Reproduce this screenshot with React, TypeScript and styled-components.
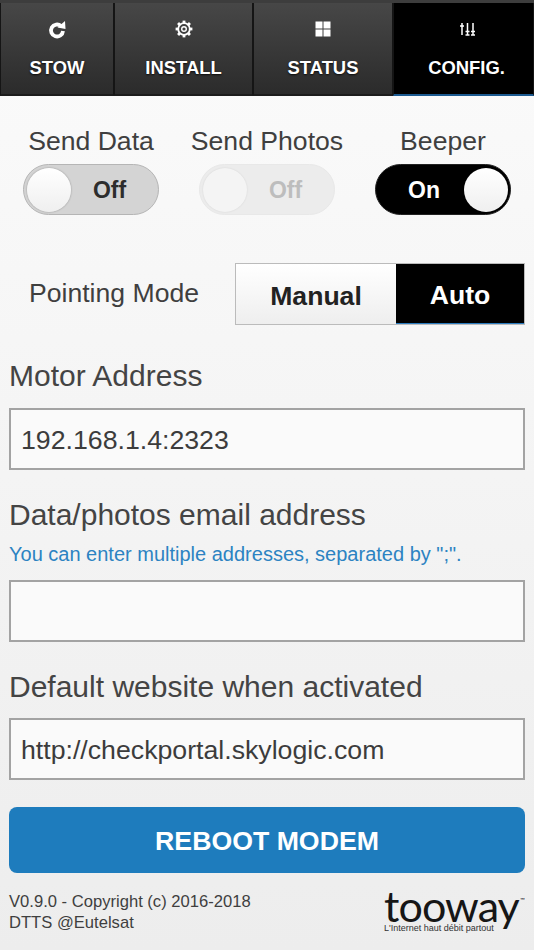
import React from 'react'
import styled, { createGlobalStyle } from 'styled-components'

const Global = createGlobalStyle`
  html, body { margin: 0; padding: 0; }
  body { font-family: "Liberation Sans", Arial, sans-serif; }
  * { box-sizing: border-box; }
`

const Page = styled.div`
  width: 534px;
  height: 950px;
  overflow: hidden;
  display: flex;
  flex-direction: column;
  background: linear-gradient(#fbfbfb, #ededed);
  color: #3f3f3f;
`

const TabBar = styled.div`
  height: 96px;
  flex: none;
  display: grid;
  grid-template-columns: 114px 139px 140px 141px;
  padding-top: 3px;
  background: #3d3d3d;
`

const Tab = styled.div<{ $active?: boolean }>`
  display: flex;
  flex-direction: column;
  align-items: center;
  height: 93px;
  padding-top: 14px;
  padding-left: ${p => (p.$active ? 6 : 0)}px;
  color: #fff;
  font-size: 18.4px;
  font-weight: bold;
  text-shadow: 0 1px 2px rgba(0, 0, 0, 0.8);
  border-left: 1px solid #151515;
  border-right: 1px solid #151515;
  background: ${p => (p.$active ? '#000' : 'linear-gradient(#474747, #2b2b2b)')};
  border-bottom: 2px solid ${p => (p.$active ? '#1c5a90' : '#1c1c1c')};
`

const TabIcon = styled.svg`
  width: 24px;
  height: 24px;
  flex: none;
`

const TabLabel = styled.span`
  margin-top: 16px;
  line-height: 22px;
`

const Content = styled.div`
  flex: 1;
  display: flex;
  flex-direction: column;
  padding: 0 9px;
`

const SwitchRow = styled.div`
  display: grid;
  grid-template-columns: repeat(3, 176px);
  margin: 28px -6px 0;
`

const SwitchCell = styled.div`
  display: flex;
  flex-direction: column;
  align-items: center;
  font-size: 26.6px;
  line-height: 34px;
`

const Track = styled.div<{ $on?: boolean; $disabled?: boolean }>`
  width: 136px;
  height: 51px;
  margin-top: 6px;
  border-radius: 26px;
  display: flex;
  align-items: center;
  flex-direction: ${p => (p.$on ? 'row-reverse' : 'row')};
  padding: ${p => (p.$on ? '0 2px 0 8px' : '0 10px 0 3px')};
  border: 1.5px solid ${p => (p.$on ? '#222' : p.$disabled ? '#e8e8e8' : '#b5b5b5')};
  background: ${p => (p.$on ? '#000' : p.$disabled ? '#ececec' : '#d4d4d4')};
  color: ${p => (p.$on ? '#fff' : p.$disabled ? '#bdbdbd' : '#2d2d2d')};
`

const Knob = styled.div<{ $disabled?: boolean }>`
  width: 44px;
  height: 44px;
  flex: none;
  border-radius: 50%;
  background: ${p => (p.$disabled ? '#f4f4f4' : 'linear-gradient(#fff, #efefef)')};
  box-shadow: 0 0 2px rgba(0, 0, 0, ${p => (p.$disabled ? 0.1 : 0.35)});
`

const SwitchText = styled.span`
  flex: 1;
  text-align: center;
  font-size: 23px;
  font-weight: bold;
`

const ModeRow = styled.div`
  display: flex;
  align-items: center;
  margin-top: 48px;
`

const ModeLabel = styled.div`
  width: 226px;
  padding: 0 0 2px 20px;
  font-size: 26.6px;
`

const Segmented = styled.div`
  width: 290px;
  height: 62px;
  display: grid;
  grid-template-columns: 160px 128px;
  border: 1px solid #bbb;
`

const Segment = styled.div<{ $active?: boolean }>`
  display: flex;
  align-items: center;
  justify-content: center;
  padding-top: 4px;
  font-size: 26.6px;
  font-weight: bold;
  color: ${p => (p.$active ? '#fff' : '#222')};
  background: ${p => (p.$active ? '#000' : 'linear-gradient(#fff, #eee)')};
  border-bottom: ${p => (p.$active ? '1px solid #2a7cc0' : 'none')};
`

const FieldLabel = styled.div`
  font-size: 30px;
  line-height: 34px;
  color: #444;
`

const Hint = styled.div`
  font-size: 20px;
  line-height: 24px;
  margin-top: 10px;
  color: #2c83c2;
`

const Input = styled.input`
  display: block;
  width: 516px;
  height: 62px;
  flex: none;
  padding: 2px 10px 0;
  border: 2px solid #a3a3a3;
  border-radius: 0;
  outline: none;
  background: #fafafa;
  font-family: inherit;
  font-size: 26.7px;
  color: #3c3c3c;
`

const Field = styled.div<{ $top: number; $gap: number }>`
  display: flex;
  flex-direction: column;
  margin-top: ${p => p.$top}px;

  ${Input} {
    margin-top: ${p => p.$gap}px;
  }
`

const RebootButton = styled.button`
  width: 516px;
  height: 66px;
  flex: none;
  margin-top: 27px;
  padding: 3px 0 0;
  border: none;
  border-radius: 8px;
  background: #1e7cbd;
  color: #fff;
  font-family: inherit;
  font-size: 26.7px;
  font-weight: bold;
`

const Footer = styled.div`
  display: flex;
  justify-content: space-between;
  margin-top: 18px;
`

const Copyright = styled.div`
  font-size: 16.6px;
  line-height: 21px;
  color: #3f3f3f;
`

const Logo = styled.div`
  display: flex;
  flex-direction: column;
  width: 141px;
  margin-top: -6px;
  color: #161616;
`

const LogoWord = styled.div`
  font-family: Lato, "Noto Sans", sans-serif;
  font-size: 43px;
  font-weight: 400;
  line-height: 30px;
  letter-spacing: -0.9px;
  white-space: nowrap;
`

const LogoMark = styled.span`
  font-size: 6px;
  letter-spacing: 0;
  vertical-align: 20px;
  margin-left: 1px;
`

const LogoTag = styled.div`
  font-size: 9px;
  line-height: 10px;
  margin-top: 2px;
  color: #333;
  white-space: nowrap;
`

function ToggleSwitch({ on, disabled }: { on?: boolean; disabled?: boolean }) {
  return (
    <Track $on={on} $disabled={disabled}>
      <Knob $disabled={disabled} />
      <SwitchText>{on ? 'On' : 'Off'}</SwitchText>
    </Track>
  )
}

const gearTeeth = [0, 45, 90, 135, 180, 225, 270, 315]

export default function App() {
  return (
    <Page>
      <Global />
      <TabBar>
        <Tab>
          <TabIcon viewBox="0 0 24 24">
            <path d="M16 9A6 6 0 1 0 18 14" fill="none" stroke="#fff" strokeWidth="3.8" />
            <polygon points="12.5,10.5 20.5,12 20,4" fill="#fff" />
          </TabIcon>
          <TabLabel>STOW</TabLabel>
        </Tab>
        <Tab>
          <TabIcon viewBox="0 0 24 24">
            {gearTeeth.map(a => (
              <rect key={a} x="10.6" y="3.6" width="2.8" height="3" fill="#fff" transform={`rotate(${a} 12 12)`} />
            ))}
            <circle cx="12" cy="12" r="5.8" fill="none" stroke="#fff" strokeWidth="1.8" />
            <circle cx="12" cy="12" r="2.3" fill="none" stroke="#fff" strokeWidth="1.4" />
          </TabIcon>
          <TabLabel>INSTALL</TabLabel>
        </Tab>
        <Tab>
          <TabIcon viewBox="0 0 24 24">
            <rect x="4.5" y="4.5" width="7" height="7" fill="#fff" />
            <rect x="12.5" y="4.5" width="7" height="7" fill="#fff" />
            <rect x="4.5" y="12.5" width="7" height="7" fill="#fff" />
            <rect x="12.5" y="12.5" width="7" height="7" fill="#fff" />
          </TabIcon>
          <TabLabel>STATUS</TabLabel>
        </Tab>
        <Tab $active>
          <TabIcon viewBox="0 0 24 24">
            <path
              d="M7 6v12M5 9h4M12.5 6v12M10.5 14.5h4M10.5 18h4M18 6v12M16 14.5h4M16 18h4"
              fill="none"
              stroke="#fff"
              strokeWidth="1.5"
            />
          </TabIcon>
          <TabLabel>CONFIG.</TabLabel>
        </Tab>
      </TabBar>
      <Content>
        <SwitchRow>
          <SwitchCell>
            Send Data
            <ToggleSwitch />
          </SwitchCell>
          <SwitchCell>
            Send Photos
            <ToggleSwitch disabled />
          </SwitchCell>
          <SwitchCell>
            Beeper
            <ToggleSwitch on />
          </SwitchCell>
        </SwitchRow>
        <ModeRow>
          <ModeLabel>Pointing Mode</ModeLabel>
          <Segmented>
            <Segment>Manual</Segment>
            <Segment $active>Auto</Segment>
          </Segmented>
        </ModeRow>
        <Field $top={34} $gap={15}>
          <FieldLabel>Motor Address</FieldLabel>
          <Input defaultValue="192.168.1.4:2323" />
        </Field>
        <Field $top={28} $gap={14}>
          <FieldLabel>Data/photos email address</FieldLabel>
          <Hint>You can enter multiple addresses, separated by ";".</Hint>
          <Input />
        </Field>
        <Field $top={28} $gap={14}>
          <FieldLabel>Default website when activated</FieldLabel>
          <Input defaultValue="http://checkportal.skylogic.com" />
        </Field>
        <RebootButton>REBOOT MODEM</RebootButton>
        <Footer>
          <Copyright>
            V0.9.0 - Copyright (c) 2016-2018
            <br />
            DTTS @Eutelsat
          </Copyright>
          <Logo>
            <LogoWord>
              tooway<LogoMark>™</LogoMark>
            </LogoWord>
            <LogoTag>L'Internet haut débit partout</LogoTag>
          </Logo>
        </Footer>
      </Content>
    </Page>
  )
}
